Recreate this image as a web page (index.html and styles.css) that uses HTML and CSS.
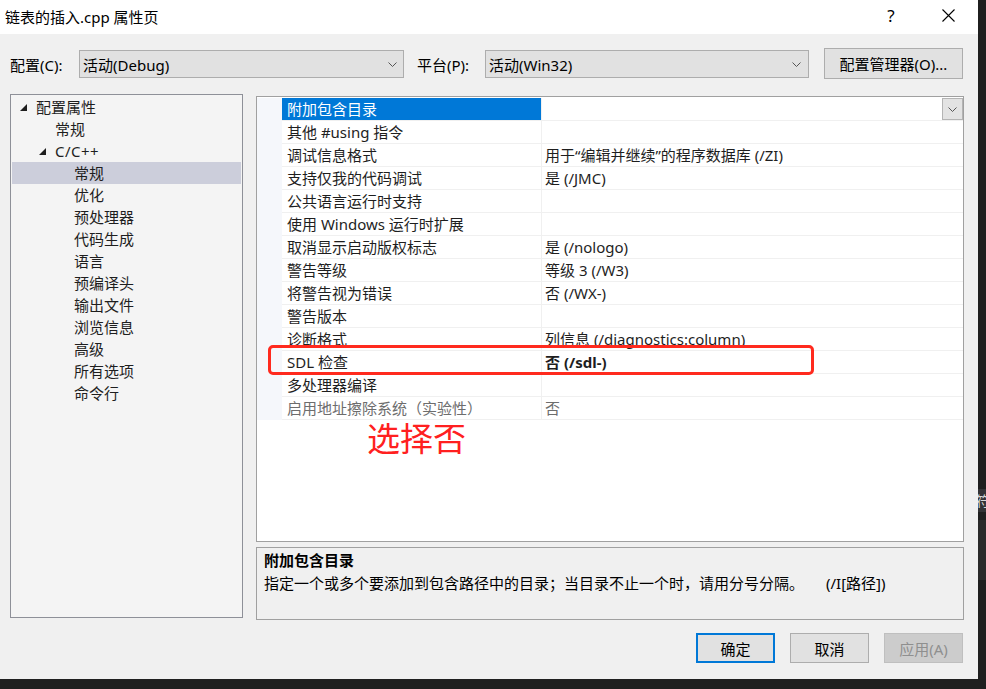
FILE: index.html
```html
<!DOCTYPE html>
<html lang="zh-CN">
<head>
<meta charset="utf-8">
<title>链表的插入.cpp 属性页</title>
<link rel="stylesheet" href="styles.css">
</head>
<body>
<div class="screen">
  <div class="dialog">
    <div class="titlebar">
      <span class="title">链表的插入.cpp 属性页</span>
      <span class="tb-help">?</span>
      <span class="tb-close"><svg width="13" height="13" viewBox="0 0 13 13"><path d="M0.5 0.5 L12.5 12.5 M12.5 0.5 L0.5 12.5" stroke="#000" stroke-width="1.1" fill="none"/></svg></span>
    </div>

    <div class="toolbar">
      <span class="lbl lbl-config">配置(C):</span>
      <div class="combo combo-config"><span class="combo-text">活动(Debug)</span><svg class="chev" width="9" height="5" viewBox="0 0 9 5"><path d="M0.5 0.5 L4.5 4.5 L8.5 0.5" stroke="#555" stroke-width="1" fill="none"/></svg></div>
      <span class="lbl lbl-platform">平台(P):</span>
      <div class="combo combo-platform"><span class="combo-text">活动(Win32)</span><svg class="chev" width="9" height="5" viewBox="0 0 9 5"><path d="M0.5 0.5 L4.5 4.5 L8.5 0.5" stroke="#555" stroke-width="1" fill="none"/></svg></div>
      <button class="btn btn-manager">配置管理器(O)...</button>
    </div>

    <div class="main">
      <div class="tree">
        <div class="trow lv0"><span class="twisty"><svg width="7" height="7" viewBox="0 0 7 7"><polygon points="7,0 7,7 0,7" fill="#1e1e1e"/></svg></span><span>配置属性</span></div>
        <div class="trow lv1"><span class="twisty"></span><span>常规</span></div>
        <div class="trow lv1"><span class="twisty"><svg width="7" height="7" viewBox="0 0 7 7"><polygon points="7,0 7,7 0,7" fill="#1e1e1e"/></svg></span><span class="cpp">C/C++</span></div>
        <div class="trow lv2 tsel"><span class="twisty"></span><span>常规</span></div>
        <div class="trow lv2"><span class="twisty"></span><span>优化</span></div>
        <div class="trow lv2"><span class="twisty"></span><span>预处理器</span></div>
        <div class="trow lv2"><span class="twisty"></span><span>代码生成</span></div>
        <div class="trow lv2"><span class="twisty"></span><span>语言</span></div>
        <div class="trow lv2"><span class="twisty"></span><span>预编译头</span></div>
        <div class="trow lv2"><span class="twisty"></span><span>输出文件</span></div>
        <div class="trow lv2"><span class="twisty"></span><span>浏览信息</span></div>
        <div class="trow lv2"><span class="twisty"></span><span>高级</span></div>
        <div class="trow lv2"><span class="twisty"></span><span>所有选项</span></div>
        <div class="trow lv2"><span class="twisty"></span><span>命令行</span></div>
      </div>

      <div class="right">
        <div class="grid">
          <div class="grow gsel"><div class="gutter"></div><div class="gname">附加包含目录</div><div class="gval"><span class="ddbtn"><svg width="9" height="5" viewBox="0 0 9 5"><path d="M0.5 0.5 L4.5 4.5 L8.5 0.5" stroke="#555" stroke-width="1" fill="none"/></svg></span></div></div>
          <div class="grow"><div class="gutter"></div><div class="gname">其他 #using 指令</div><div class="gval"></div></div>
          <div class="grow"><div class="gutter"></div><div class="gname">调试信息格式</div><div class="gval">用于“编辑并继续”的程序数据库 (/ZI)</div></div>
          <div class="grow"><div class="gutter"></div><div class="gname">支持仅我的代码调试</div><div class="gval">是 (/JMC)</div></div>
          <div class="grow"><div class="gutter"></div><div class="gname">公共语言运行时支持</div><div class="gval"></div></div>
          <div class="grow"><div class="gutter"></div><div class="gname">使用 Windows 运行时扩展</div><div class="gval"></div></div>
          <div class="grow"><div class="gutter"></div><div class="gname">取消显示启动版权标志</div><div class="gval">是 (/nologo)</div></div>
          <div class="grow"><div class="gutter"></div><div class="gname">警告等级</div><div class="gval">等级 3 (/W3)</div></div>
          <div class="grow"><div class="gutter"></div><div class="gname">将警告视为错误</div><div class="gval">否 (/WX-)</div></div>
          <div class="grow"><div class="gutter"></div><div class="gname">警告版本</div><div class="gval"></div></div>
          <div class="grow"><div class="gutter"></div><div class="gname">诊断格式</div><div class="gval">列信息 (/diagnostics:column)</div></div>
          <div class="grow"><div class="gutter"></div><div class="gname">SDL 检查</div><div class="gval gbold">否 (/sdl-)</div></div>
          <div class="grow"><div class="gutter"></div><div class="gname">多处理器编译</div><div class="gval"></div></div>
          <div class="grow gdim"><div class="gutter"></div><div class="gname">启用地址擦除系统（实验性）</div><div class="gval">否</div></div>
          <div class="redbox"></div>
          <div class="note">选择否</div>
        </div>
        <div class="desc">
          <div class="desc-title">附加包含目录</div>
          <div class="desc-text">指定一个或多个要添加到包含路径中的目录；当目录不止一个时，请用分号分隔。<span class="desc-flag">(/I[路径])</span></div>
        </div>
      </div>
    </div>

    <div class="footer">
      <button class="fbtn primary">确定</button>
      <button class="fbtn">取消</button>
      <button class="fbtn disabled">应用(A)</button>
    </div>
  </div>

  <div class="side">
    <div class="side-a"></div>
    <div class="side-b"><span class="side-glyph">符</span></div>
    <div class="side-c"></div>
    <div class="side-d"></div>
    <div class="side-e"></div>
  </div>
</div>
</body>
</html>
```

FILE: styles.css
```css
html, body {
  margin: 0;
  padding: 0;
}
body {
  background: #1f1f1f;
  width: 986px;
  height: 689px;
  overflow: hidden;
  font-family: "Noto Sans", "Noto Sans CJK SC", sans-serif;
  font-size: 15px;
  color: #1a1a1a;
}
.screen {
  display: flex;
  width: 986px;
  height: 689px;
}
.dialog {
  width: 978px;
  height: 679px;
  background: #f0f0f0;
  display: flex;
  flex-direction: column;
  flex: none;
}

/* title bar */
.titlebar {
  height: 34px;
  background: #ffffff;
  display: flex;
  align-items: center;
  padding-left: 5px;
  padding-right: 7px;
  flex: none;
}
.title {
  flex: 1;
  font-size: 15px;
  color: #000;
  margin-top: -2px;
}
.tb-help {
  width: 46px;
  margin-right: 11px;
  text-align: center;
  font-size: 17px;
  color: #000;
  margin-top: -3px;
}
.tb-close {
  width: 46px;
  display: flex;
  justify-content: center;
  align-items: center;
  margin-top: -3px;
}

/* toolbar */
.toolbar {
  height: 60px;
  display: flex;
  align-items: center;
  padding-left: 10px;
  flex: none;
}
.lbl {
  color: #000;
}
.lbl-config {
  width: 69px;
}
.lbl-platform {
  width: 68px;
  margin-left: 13px;
}
.combo {
  box-sizing: border-box;
  height: 28px;
  border: 1px solid #adadad;
  background: #e1e1e1;
  display: flex;
  align-items: center;
  padding-left: 3px;
  color: #000;
}
.combo-text {
  flex: 1;
}
.combo-config {
  width: 325px;
  padding-right: 6px;
}
.combo-platform {
  width: 324px;
  padding-right: 7px;
}
.btn {
  font-family: inherit;
  font-size: 15px;
  color: #000;
  box-sizing: border-box;
  border: 1px solid #adadad;
  background: #e1e1e1;
  padding: 0;
}
.btn-manager {
  width: 139px;
  height: 31px;
  margin-left: 15px;
  margin-top: -1px;
}

/* main */
.main {
  display: flex;
  align-items: flex-start;
  padding-left: 10px;
  height: 526px;
  flex: none;
}
.tree {
  box-sizing: border-box;
  width: 233px;
  height: 524px;
  border: 1px solid #8e9098;
  background: #f4f4f4;
  padding-top: 1px;
}
.trow {
  height: 22px;
  line-height: 22px;
  margin: 0 1px;
  display: flex;
  align-items: center;
  color: #1e1e1e;
}
.lv0 { padding-left: 8px; }
.lv1 { padding-left: 27px; }
.lv2 { padding-left: 46px; }
.cpp { letter-spacing: 0.5px; }
.tsel {
  background: #cccedb;
}
.twisty {
  width: 16px;
  height: 22px;
  display: flex;
  align-items: center;
  flex: none;
}

.right {
  margin-left: 13px;
  margin-top: 2px;
  width: 708px;
}
.grid {
  position: relative;
  box-sizing: border-box;
  width: 708px;
  height: 446px;
  border: 1px solid #a0a0a0;
  background: #ffffff;
  padding-top: 1px;
}
.grow {
  display: flex;
  height: 23px;
  line-height: 22px;
  color: #1e1e1e;
}
.gutter {
  width: 25px;
  background: #f5f7fb;
  flex: none;
}
.gname {
  box-sizing: border-box;
  width: 260px;
  padding-left: 5px;
  border-right: 1px solid #f0f0f0;
  border-bottom: 1px solid #f0f0f0;
  white-space: nowrap;
  overflow: hidden;
  flex: none;
}
.gval {
  flex: 1;
  display: flex;
  padding-left: 3px;
  border-bottom: 1px solid #f0f0f0;
  white-space: nowrap;
}
.gsel .gname {
  background: #0078d7;
  color: #ffffff;
}
.gbold {
  font-weight: bold;
}
.gdim {
  color: #6d6d6d;
}
.ddbtn {
  margin-left: auto;
  box-sizing: border-box;
  width: 21px;
  height: 22px;
  border: 1px solid #b4b4b4;
  background: #e3e3e3;
  display: flex;
  align-items: center;
  justify-content: center;
}
.redbox {
  position: absolute;
  left: 11px;
  top: 248px;
  width: 546px;
  height: 30px;
  box-sizing: border-box;
  border: 3px solid #ff2a1e;
  border-radius: 5px;
}
.note {
  position: absolute;
  left: 110px;
  top: 324px;
  font-family: "Noto Sans CJK SC", sans-serif;
  font-size: 33px;
  line-height: 33px;
  color: #ff2020;
}

.desc {
  box-sizing: border-box;
  width: 708px;
  height: 73px;
  margin-top: 5px;
  border: 1px solid #a0a0a0;
  background: #f0f0f0;
  padding: 1px 7px 0;
  color: #000;
}
.desc-title {
  font-weight: bold;
  line-height: 22px;
}
.desc-text {
  line-height: 22px;
  margin-top: 1px;
  white-space: nowrap;
}
.desc-flag {
  margin-left: 22px;
}

/* footer */
.footer {
  display: flex;
  justify-content: flex-end;
  gap: 15px;
  padding-right: 15px;
  margin-top: 13px;
  flex: none;
}
.fbtn {
  font-family: inherit;
  font-size: 15px;
  color: #000;
  width: 79px;
  height: 30px;
  box-sizing: border-box;
  border: 1px solid #adadad;
  background: #e1e1e1;
  padding: 0;
}
.fbtn.primary {
  border: 2px solid #0078d7;
}
.fbtn.disabled {
  background: #cccccc;
  border-color: #bfbfbf;
  color: #8f8f8f;
}

/* background strip at right */
.side {
  width: 8px;
  flex: none;
  display: flex;
  flex-direction: column;
}
.side-a { height: 489px; background: #1f1f1f; }
.side-b {
  height: 23px;
  background: #333336;
  overflow: hidden;
  line-height: 23px;
  font-family: "Noto Sans CJK SC", sans-serif;
  font-size: 14px;
  color: #d8d8d8;
  white-space: nowrap;
}
.side-glyph { margin-left: -2px; }
.side-c { height: 8px; background: #1f1f1f; }
.side-d { height: 60px; background: #2a2a2a; }
.side-e { flex: 1; background: #1f1f1f; }
```
